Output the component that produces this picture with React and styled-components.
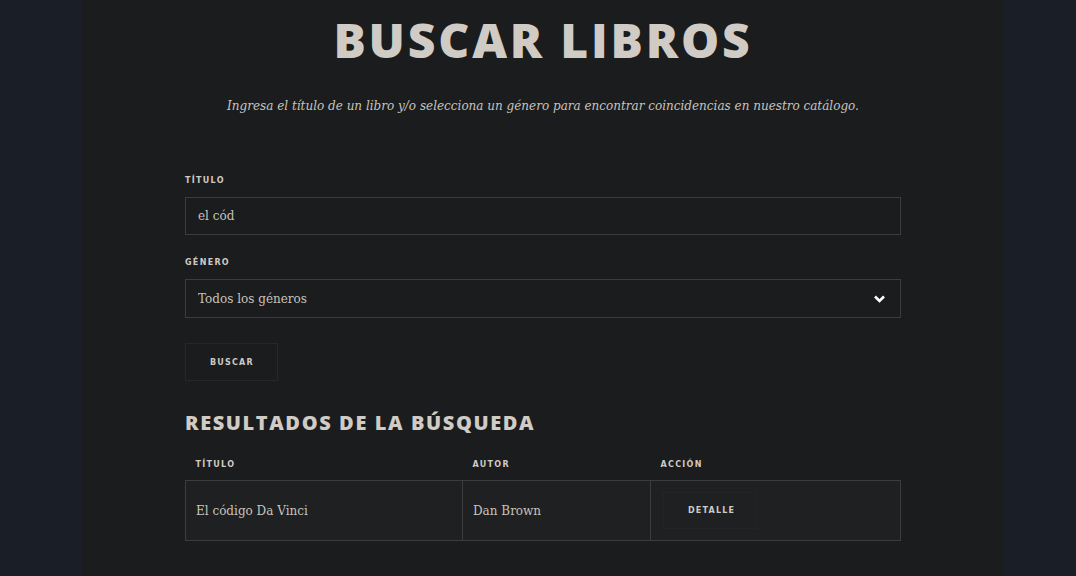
import React, { useState } from 'react'
import styled, { createGlobalStyle } from 'styled-components'

const GlobalStyle = createGlobalStyle`
  html, body {
    margin: 0;
    padding: 0;
    background: #1a1e26;
  }
  * {
    box-sizing: border-box;
  }
`

const Page = styled.div`
  display: flex;
  padding-left: 82px;
  min-height: 576px;
  background: #1a1e26;
`

const Panel = styled.main`
  width: 922px;
  padding: 8px 103px 36px;
  background: #1b1c1e;
  display: flex;
  flex-direction: column;
`

const Heading = styled.h1`
  margin: 0;
  font-family: "Open Sans", "Noto Sans", sans-serif;
  font-weight: 800;
  font-size: 48px;
  line-height: 64px;
  letter-spacing: 2.8px;
  text-align: center;
  color: #d0cbc5;
`

const Lead = styled.p`
  margin: 23px 0 0;
  font-family: "DejaVu Serif", serif;
  font-style: italic;
  font-size: 12px;
  line-height: 22px;
  text-align: center;
  color: #c8c4bd;
`

const Form = styled.form`
  margin-top: 58px;
  display: flex;
  flex-direction: column;
`

const Label = styled.label`
  display: block;
  font-family: "DejaVu Sans", sans-serif;
  font-weight: 700;
  font-size: 8px;
  line-height: 12px;
  letter-spacing: 1.3px;
  color: #cfcac4;
  margin-bottom: 10px;
  margin-top: ${p => (p.$first ? '0' : '22px')};
`

const Field = styled.div`
  position: relative;
  height: ${p => p.$h || 38}px;
  border: 1px solid #3b3c3e;
  background: #1b1c1e;
  display: flex;
  align-items: center;
`

const Input = styled.input`
  width: 100%;
  height: 100%;
  border: 0;
  outline: none;
  background: transparent;
  padding: 0 12px;
  font-family: "DejaVu Serif", serif;
  font-size: 12px;
  color: #c8c4bd;
`

const Select = styled.select`
  appearance: none;
  width: 100%;
  height: 100%;
  border: 0;
  outline: none;
  background: transparent;
  padding: 0 12px;
  font-family: "DejaVu Serif", serif;
  font-size: 12px;
  color: #c8c4bd;
`

const Chevron = styled.svg`
  position: absolute;
  right: 14px;
  top: 50%;
  margin-top: -5px;
  pointer-events: none;
`

const Button = styled.button`
  height: 38px;
  padding: 0 24px;
  background: transparent;
  border: 1px solid ${p => p.$border || '#26272a'};
  font-family: "DejaVu Sans", sans-serif;
  font-weight: 700;
  font-size: 8px;
  letter-spacing: 1.2px;
  color: #cfcac4;
  cursor: pointer;
`

const SearchButton = styled(Button)`
  align-self: flex-start;
  margin-top: 25px;
  width: 93px;
`

const DetailButton = styled(Button)`
  width: 94px;
  height: 37px;
`

const SubTitle = styled.h2`
  margin: 29px 0 0;
  font-family: "Open Sans", "Noto Sans", sans-serif;
  font-weight: 800;
  font-size: 20px;
  line-height: 26px;
  letter-spacing: 1.6px;
  color: #d0cbc5;
`

const Table = styled.table`
  margin-top: 23px;
  width: 100%;
  border-collapse: collapse;
`

const Th = styled.th`
  text-align: left;
  padding: 0 10px 9px;
  font-family: "DejaVu Sans", sans-serif;
  font-weight: 700;
  font-size: 8px;
  line-height: 12px;
  letter-spacing: 1.3px;
  color: #cfcac4;
  width: ${p => p.$w};
`

const Td = styled.td`
  height: 60px;
  padding: 0 10px;
  border: 1px solid #3b3c3e;
  background: #1e2022;
  font-family: "DejaVu Serif", serif;
  font-size: 12px;
  color: #c8c4bd;
  padding-left: ${p => p.$pl || '10px'};
`

const chevron = (
  <Chevron width="13" height="10" viewBox="0 0 13 10">
    <path d="M2 2.5 L6.5 7 L11 2.5" fill="none" stroke="#ffffff" strokeWidth="2.6" />
  </Chevron>
)

const App = () => {
  const [title, setTitle] = useState('el cód')

  return (
    <Page>
      <GlobalStyle />
      <Panel>
        <Heading>BUSCAR LIBROS</Heading>
        <Lead>Ingresa el título de un libro y/o selecciona un género para encontrar coincidencias en nuestro catálogo.</Lead>
        <Form onSubmit={e => e.preventDefault()}>
          <Label $first htmlFor="titulo">TÍTULO</Label>
          <Field>
            <Input id="titulo" value={title} onChange={e => setTitle(e.target.value)} />
          </Field>
          <Label htmlFor="genero">GÉNERO</Label>
          <Field $h={39}>
            <Select id="genero" defaultValue="">
              <option value="">Todos los géneros</option>
            </Select>
            {chevron}
          </Field>
          <SearchButton type="submit">BUSCAR</SearchButton>
        </Form>
        <SubTitle>RESULTADOS DE LA BÚSQUEDA</SubTitle>
        <Table>
          <thead>
            <tr>
              <Th $w="277px">TÍTULO</Th>
              <Th $w="188px">AUTOR</Th>
              <Th>ACCIÓN</Th>
            </tr>
          </thead>
          <tbody>
            <tr>
              <Td>El código Da Vinci</Td>
              <Td>Dan Brown</Td>
              <Td $pl="12px">
                <DetailButton $border="#222427">DETALLE</DetailButton>
              </Td>
            </tr>
          </tbody>
        </Table>
      </Panel>
    </Page>
  )
}

export default App
